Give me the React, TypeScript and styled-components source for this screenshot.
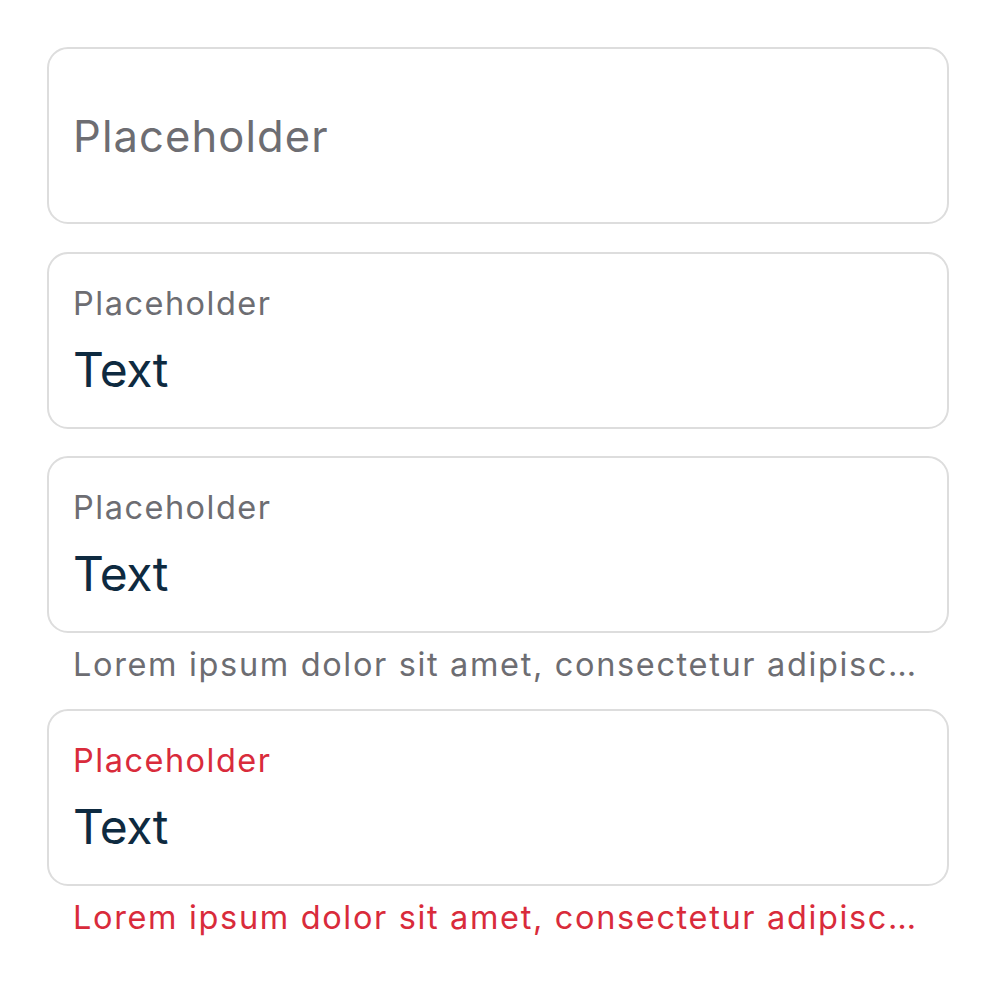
import React from "react";
import styled, { createGlobalStyle } from "styled-components";

const GlobalStyle = createGlobalStyle`
  html, body { margin: 0; padding: 0; background: #ffffff; }
  body { font-family: Inter, "Noto Sans", sans-serif; -webkit-font-smoothing: antialiased; }
`;

const Page = styled.div`
  width: 996px;
  height: 988px;
  box-sizing: border-box;
  padding: 47px 47px 0 47px;
  display: flex;
  flex-direction: column;
`;

const Group = styled.div<{ $gap: number }>`
  display: flex;
  flex-direction: column;
  margin-bottom: ${(p) => p.$gap}px;
`;

const Field = styled.div`
  box-sizing: border-box;
  height: 177px;
  border: 2.5px solid #dddddd;
  border-radius: 21px;
  padding: 0 24px;
  display: flex;
  flex-direction: column;
  justify-content: center;
  background: #ffffff;
`;

const Placeholder = styled.div`
  font-size: 43.5px;
  line-height: 50px;
  color: #6d6d72;
  letter-spacing: 1.1px;
`;

const Label = styled.div<{ $error?: boolean }>`
  font-size: 32.5px;
  line-height: 40px;
  letter-spacing: 1.5px;
  color: ${(p) => (p.$error ? "#d92b3b" : "#6d6d72")};
`;

const Value = styled.div`
  font-size: 48px;
  line-height: 56px;
  letter-spacing: -0.5px;
  color: #0e2a40;
  margin-top: 18px;
`;

const Helper = styled.div<{ $error?: boolean }>`
  font-size: 32.5px;
  line-height: 40px;
  letter-spacing: 1.65px;
  padding: 12px 10px 0 26px;
  color: ${(p) => (p.$error ? "#d92b3b" : "#6d6d72")};
  white-space: nowrap;
  overflow: hidden;
  text-overflow: ellipsis;
`;

export default function App() {
  return (
    <>
      <GlobalStyle />
      <Page>
        <Group $gap={28}>
          <Field>
            <Placeholder>Placeholder</Placeholder>
          </Field>
        </Group>
        <Group $gap={27}>
          <Field>
            <Label>Placeholder</Label>
            <Value>Text</Value>
          </Field>
        </Group>
        <Group $gap={24}>
          <Field>
            <Label>Placeholder</Label>
            <Value>Text</Value>
          </Field>
          <Helper>Lorem ipsum dolor sit amet, consectetur adipisc…</Helper>
        </Group>
        <Group $gap={0}>
          <Field>
            <Label $error>Placeholder</Label>
            <Value>Text</Value>
          </Field>
          <Helper $error>Lorem ipsum dolor sit amet, consectetur adipisc…</Helper>
        </Group>
      </Page>
    </>
  );
}
